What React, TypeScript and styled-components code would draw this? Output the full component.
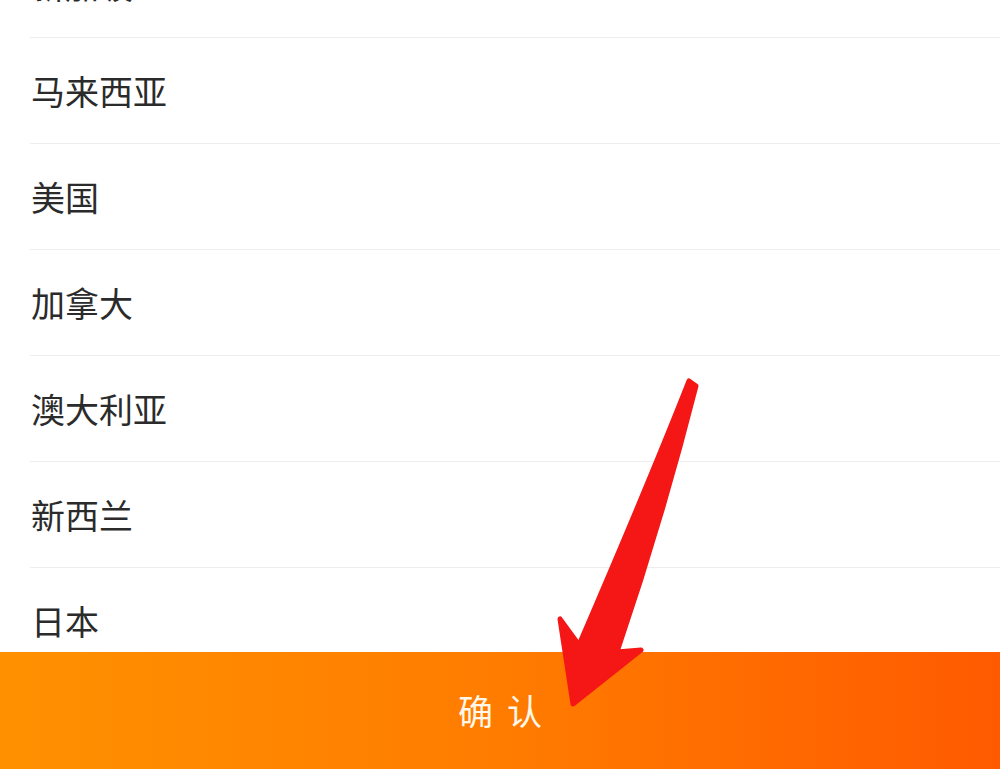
import styled, { createGlobalStyle } from "styled-components";

const GlobalStyle = createGlobalStyle`
  html, body {
    margin: 0;
    padding: 0;
    background: #ffffff;
  }
  body {
    font-family: "Noto Sans CJK SC", "Noto Sans", sans-serif;
  }
`;

const countries = ["新加坡", "马来西亚", "美国", "加拿大", "澳大利亚", "新西兰", "日本"];

const App = () => {
  return (
    <>
      <GlobalStyle />
      <Page>
        <ListWrap>
          <List>
            {countries.map((name) => (
              <Row key={name}>
                <Name>{name}</Name>
              </Row>
            ))}
          </List>
        </ListWrap>
        <ConfirmBar type="button">确 认</ConfirmBar>
        <Arrow viewBox="0 0 1000 769" aria-hidden="true">
          <path
            d="M689 381 Q648 485 579 645 L560 619 L573 704 L641 650 L617 652 Q662 520 696 386 Z"
            fill="#f51616"
            stroke="#f51616"
            strokeWidth="5"
            strokeLinejoin="round"
          />
        </Arrow>
      </Page>
    </>
  );
};

const Page = styled.div`
  position: relative;
  width: 100%;
  height: 769px;
  display: flex;
  flex-direction: column;
  overflow: hidden;
`;

const ListWrap = styled.div`
  flex: 1;
  overflow: hidden;
`;

const List = styled.ul`
  list-style: none;
  margin: -68px 0 0;
  padding: 0 0 0 30px;
`;

const Row = styled.li`
  height: 105px;
  display: flex;
  align-items: center;
  border-bottom: 1px solid #ededed;
`;

const Name = styled.span`
  font-size: 34px;
  line-height: 1;
  color: #2b2b2b;
  padding-left: 1px;
`;

const ConfirmBar = styled.button`
  flex: 0 0 117px;
  border: none;
  margin: 0;
  padding: 0 0 2px;
  background: linear-gradient(90deg, #ff9100 0%, #ff7c00 50%, #ff5a00 100%);
  color: #fff7e8;
  font-family: "Noto Sans CJK SC", sans-serif;
  font-size: 35px;
  letter-spacing: 3px;
  text-indent: 3px;
  cursor: pointer;
`;

const Arrow = styled.svg`
  position: absolute;
  left: 0;
  top: 0;
  width: 1000px;
  height: 769px;
  pointer-events: none;
`;

export default App;
